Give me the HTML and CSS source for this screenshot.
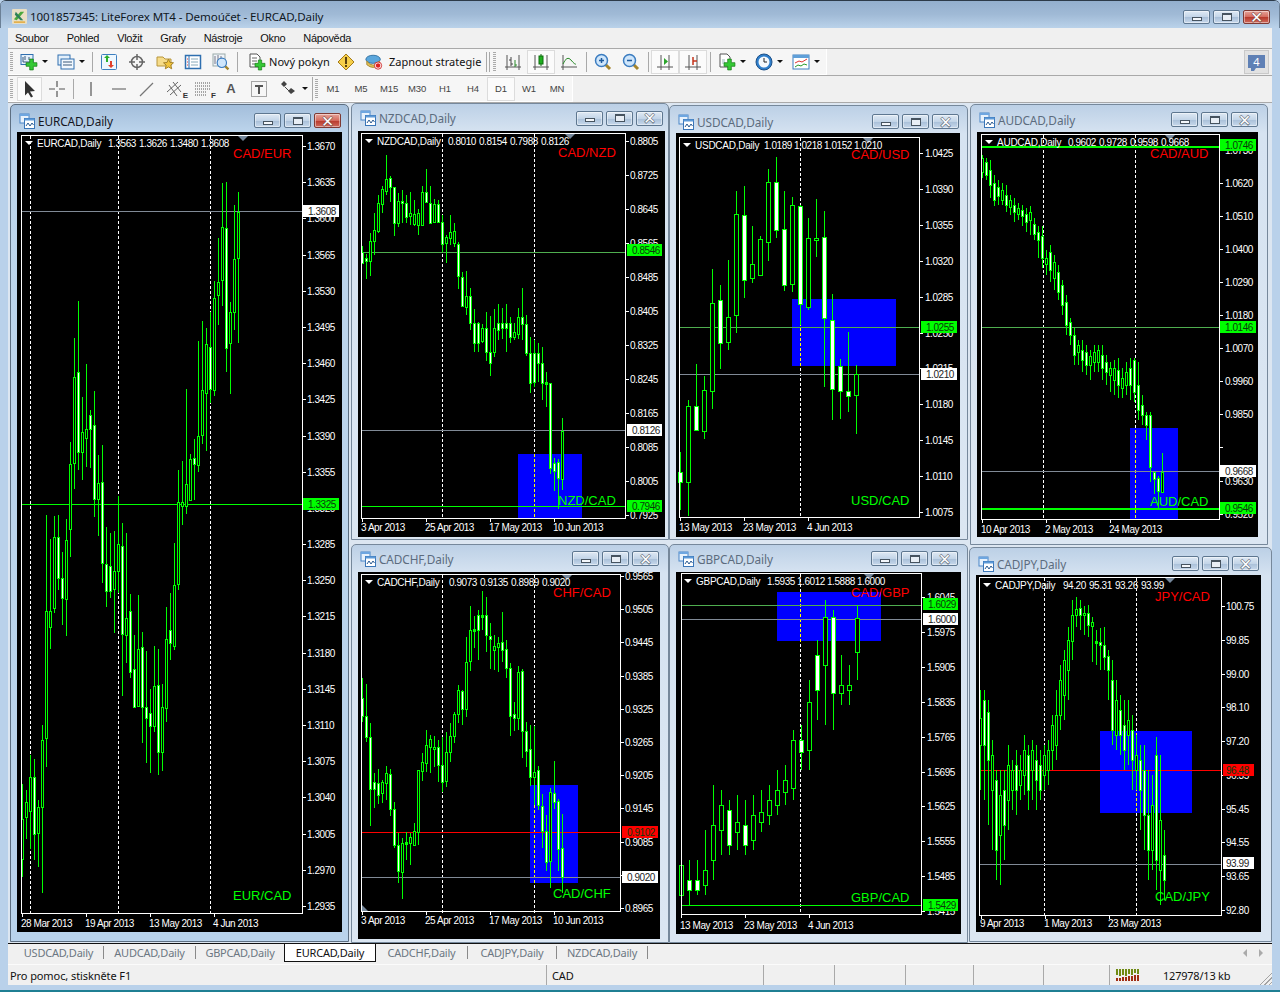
FILE: index.html
```html
<!DOCTYPE html>
<html lang="cs">
<head>
<meta charset="utf-8">
<title>1001857345: LiteForex MT4 - Demoúčet - EURCAD,Daily</title>
<link rel="stylesheet" href="styles.css">
</head>
<body>
<svg class="sprite" aria-hidden="true">
  <symbol id="plus" viewBox="0 0 18 18"><path d="M6.500 1.500h5v5h5v5h-5v5h-5v-5h-5v-5h5z" fill="#35c935" stroke="#127a12"/></symbol>
  <symbol id="chartwin" viewBox="0 0 16 16"><rect x="1" y="1" width="9" height="9" fill="#e8f2fc" stroke="#4a86c8"/><rect x="1" y="1" width="9" height="2" fill="#6ea6e0"/><rect x="5.500" y="5.500" width="10" height="10" fill="#fff" stroke="#3a76b8"/><rect x="5.500" y="5.500" width="10" height="2" fill="#5d9ad8"/><path d="M7 13l2-3 2 3 2-3 1.500 2" fill="none" stroke="#2a5a90"/></symbol>
  <symbol id="glass" viewBox="0 0 18 18"><path d="M11 11l5 5" stroke="#a5852c" stroke-width="3"/><circle cx="7.500" cy="7.500" r="6" fill="#cfe6fb" stroke="#3b7cc0" stroke-width="1.500"/></symbol>
</svg>
<div class="app">
  <header class="titlebar">
    <svg class="appicon" viewBox="0 0 16 16"><rect width="16" height="16" rx="1" fill="#e9dfc4"/><path d="M2 11L9 3h4L5 12z" fill="#4aa83c"/><path d="M4 3l8 9H9L3 6z" fill="#2f7f5a"/><path d="M2 13h12v2H2z" fill="#e3b04e"/></svg>
    <span class="apptitle">1001857345: LiteForex MT4 - Demoúčet - EURCAD,Daily</span>
    <div class="winbtns main">
      <span class="wb"><i class="gmin"></i></span><span class="wb"><i class="gmax"></i></span><span class="wb close"><i class="gx">×</i></span>
    </div>
  </header>
  <nav class="menu"><span>Soubor</span><span>Pohled</span><span>Vložit</span><span>Grafy</span><span>Nástroje</span><span>Okno</span><span>Nápověda</span></nav>
  <div class="tbrow r1">
    <div class="band band1">
      <i class="grip"></i>
      <span class="b wide">
        <svg class="ic" viewBox="0 0 18 18"><rect x="1" y="1.500" width="12" height="10" fill="#e4f0fb" stroke="#2f6fb0"/><path d="M3 4v5h8M5 3v4M9 4v3" stroke="#39597a" fill="none"/><use href="#plus" x="5" y="5" width="13" height="13"/></svg><i class="caret"></i>
      </span>
      <span class="b wide">
        <svg class="ic" viewBox="0 0 18 18"><rect x="1" y="2" width="12" height="10" fill="#e4f0fb" stroke="#2f6fb0"/><rect x="4" y="6" width="13" height="10" fill="#f2f8fe" stroke="#2f6fb0"/><path d="M6 9h9M6 12h9" stroke="#39597a"/></svg><i class="caret"></i>
      </span>
      <i class="sep s1"></i>
      <span class="b"><svg class="ic" viewBox="0 0 18 18"><rect x="1.500" y="1.500" width="15" height="15" rx="1" fill="#eef7fe" stroke="#3c7fc0"/><path d="M6 9V5H4l3-3 3 3H8v4z" fill="#2cb02c"/><path d="M10 8v4H8l3 3 3-3h-2V8z" fill="#e0402c"/></svg></span>
      <span class="b"><svg class="ic" viewBox="0 0 18 18"><circle cx="9" cy="9" r="5.500" fill="none" stroke="#666" stroke-width="1.500"/><path d="M9 1v6M9 11v6M1 9h6M11 9h6" stroke="#666" stroke-width="1.500"/></svg></span>
      <span class="b"><svg class="ic" viewBox="0 0 18 18"><path d="M1 4h6l2 2h6v7H1z" fill="#f6dc8a" stroke="#b8963c"/><path d="M12.500 6l1.500 3.500 3.500.3-2.700 2.400.9 3.600-3.200-1.900-3.200 1.900.9-3.600-2.700-2.400 3.500-.3z" fill="#f2c53d" stroke="#a5832a"/></svg></span>
      <span class="b"><svg class="ic" viewBox="0 0 18 18"><rect x="1.500" y="2.500" width="15" height="13" fill="#fff" stroke="#2f6fb0" stroke-width="1.500"/><path d="M5 3v12" stroke="#2f6fb0"/><path d="M3 6h1M3 9h1M3 12h1" stroke="#d33"/><path d="M7 6h7M7 9h7M7 12h7" stroke="#8ab"/></svg></span>
      <span class="b"><svg class="ic" viewBox="0 0 18 18"><rect x="1" y="1" width="12" height="12" fill="#f0f4f8" stroke="#9aa"/><path d="M3 3v8M6 2v6M9 3v8" stroke="#778"/><use href="#glass" x="4" y="4" width="14" height="14"/></svg></span>
      <i class="sep"></i>
      <span class="b labeled order"><svg class="ic" viewBox="0 0 18 18"><path d="M2 1h7l3 3v10H2z" fill="#fff" stroke="#555"/><path d="M4 5h5M4 8h5M4 11h3" stroke="#666"/><use href="#plus" x="6" y="6" width="12" height="12"/></svg><span class="tbtxt">Nový pokyn</span></span>
      <span class="b"><svg class="ic" viewBox="0 0 18 18"><path d="M9 1l8 8-8 8-8-8z" fill="#f6cf4a" stroke="#a37a1a"/><path d="M8 4h2v7H8zM8 12h2v2H8z" fill="#5a4210"/></svg></span>
      <span class="b labeled strat"><svg class="ic" viewBox="0 0 20 18"><ellipse cx="9" cy="6" rx="8" ry="4.500" fill="#5aa6dc" stroke="#2f6fa0"/><path d="M2 8q7 9 14 0v4q-7 6-14 0z" fill="#e3c25a" stroke="#a5852c"/><circle cx="14.500" cy="13" r="4" fill="#fff" stroke="#c22"/><circle cx="14.500" cy="13" r="2.500" fill="#d22"/></svg><span class="tbtxt">Zapnout strategie</span></span>
      <i class="sep double"></i>
      <i class="grip g2"></i>
      <span class="b"><svg class="ic" viewBox="0 0 18 18"><path d="M3 17V2M15 17V2M1 14h16" stroke="#555" fill="none"/><path d="M7 13V4M7 7H5M7 11h2" stroke="#444" fill="none"/><path d="M11 14V7M11 12h2" stroke="#2a8a2a" fill="none"/></svg></span>
      <span class="b on"><svg class="ic" viewBox="0 0 18 18"><path d="M3 17V2M15 17V2M1 14h16" stroke="#555" fill="none"/><rect x="7" y="3" width="4" height="8" fill="#1eb01e" stroke="#0d6d0d"/><path d="M9 1v2M9 11v2" stroke="#0d6d0d"/></svg></span>
      <span class="b"><svg class="ic" viewBox="0 0 18 18"><path d="M3 17V2M1 14h16" stroke="#555" fill="none"/><path d="M3 11q4-9 8-4t5 4" stroke="#2a8a2a" fill="none"/></svg></span>
      <i class="sep s2"></i>
      <span class="b"><svg class="ic" viewBox="0 0 18 18"><use href="#glass"/><path d="M5 7.500h5M7.500 5v5" stroke="#1d5a9c" stroke-width="1.500"/></svg></span>
      <span class="b"><svg class="ic" viewBox="0 0 18 18"><use href="#glass"/><path d="M5 7.500h5" stroke="#1d5a9c" stroke-width="1.500"/></svg></span>
      <i class="sep s2"></i>
      <span class="b on"><svg class="ic" viewBox="0 0 18 18"><path d="M5 17V2M13 17V2M1 14h16" stroke="#555" fill="none"/><path d="M8 5l4 3.500-4 3.500z" fill="#2aa52a"/></svg></span>
      <span class="b on"><svg class="ic" viewBox="0 0 18 18"><path d="M5 17V2M13 17V2M1 14h16" stroke="#555" fill="none"/><path d="M9 4v8M9 8h4" stroke="#c4341c" stroke-width="1.500"/></svg></span>
      <i class="sep s2"></i>
      <span class="b wide w5"><svg class="ic" viewBox="0 0 18 18"><path d="M2 1h7l3 3v10H2z" fill="#fff" stroke="#555"/><path d="M4 6h3v5H4z" fill="#cdd"/><use href="#plus" x="5" y="5" width="13" height="13"/></svg><i class="caret"></i></span>
      <span class="b wide w5"><svg class="ic" viewBox="0 0 18 18"><circle cx="9" cy="9" r="8" fill="#2f7fcc" stroke="#1d4f86"/><circle cx="9" cy="9" r="5.500" fill="#f5f9fd"/><path d="M9 5v4h3" stroke="#222" fill="none"/></svg><i class="caret"></i></span>
      <span class="b wide w5"><svg class="ic" viewBox="0 0 18 18"><rect x="1" y="2" width="16" height="14" fill="#fff" stroke="#3c7fc0"/><rect x="1" y="2" width="16" height="3" fill="#5f9fd8"/><path d="M3 10l4-2 3 1 5-3" stroke="#d33" fill="none"/><path d="M3 14l3-2 3 1 3-2 3 1" stroke="#2a9a2a" fill="none"/></svg><i class="caret"></i></span>
    </div>
    <div class="mailicon"><span>4</span></div>
  </div>
  <div class="tbrow r2">
    <div class="band band2">
      <i class="grip"></i>
      <span class="d on first"><svg class="ic" viewBox="0 0 18 18"><path d="M4 1l10 10-5 .5 3 5-2 1-3-5-3 3z" fill="#333"/></svg></span>
      <span class="d"><svg class="ic" viewBox="0 0 18 18"><path d="M9 1v6M9 11v6M1 9h6M11 9h6" stroke="#555" stroke-width="1.200"/></svg></span>
      <i class="sep s4"></i>
      <span class="d"><svg class="ic" viewBox="0 0 18 18"><path d="M9 2v14" stroke="#555" stroke-width="1.200"/></svg></span>
      <span class="d"><svg class="ic" viewBox="0 0 18 18"><path d="M2 9h14" stroke="#555" stroke-width="1.200"/></svg></span>
      <span class="d"><svg class="ic" viewBox="0 0 18 18"><path d="M2 16L15 3" stroke="#777" stroke-width="1.200"/></svg></span>
      <span class="d"><svg class="ic" viewBox="0 0 18 18"><path d="M1 12L12 2M4 15L15 5M3 5l8 11M7 2l8 10" stroke="#666"/></svg><b class="mini">E</b></span>
      <span class="d"><svg class="ic" viewBox="0 0 18 18"><path d="M1 3h15M1 6h15M1 9h15M1 12h11M1 15h11" stroke="#555" stroke-dasharray="1 1"/></svg><b class="mini">F</b></span>
      <span class="d"><span class="ta">A</span></span>
      <span class="d"><svg class="ic" viewBox="0 0 18 18"><rect x="1.500" y="1.500" width="15" height="15" fill="none" stroke="#555" stroke-dasharray="1 1"/><path d="M5 5h8v2h-3v7H8V7H5z" fill="#555"/></svg></span>
      <span class="d wide2"><svg class="ic" viewBox="0 0 18 18"><path d="M5 1l3 3-3 3-3-3zM12 8l4 3-4 3-3-3z" fill="#444"/><path d="M6 7l4 4" stroke="#444"/></svg><i class="caret"></i></span>
      <i class="sep s3"></i>
      <i class="grip g3"></i>
      <span class="tf">M1</span><span class="tf">M5</span><span class="tf">M15</span><span class="tf">M30</span><span class="tf">H1</span><span class="tf">H4</span><span class="tf on">D1</span><span class="tf">W1</span><span class="tf">MN</span>
    </div>
  </div>
  <main class="mdi">
    <section class="win w-eur active"><div class="wt"><svg class="wi"><use href="#chartwin"/></svg><span class="wn">EURCAD,Daily</span><div class="winbtns"><span class="wb"><i class="gmin"></i></span><span class="wb"><i class="gmax"></i></span><span class="wb close"><i class="gx">×</i></span></div></div><div class="chart" data-c="eur"></div></section>
    <section class="win w-nzd"><div class="wt"><svg class="wi"><use href="#chartwin"/></svg><span class="wn">NZDCAD,Daily</span><div class="winbtns"><span class="wb"><i class="gmin"></i></span><span class="wb"><i class="gmax"></i></span><span class="wb"><i class="gx">×</i></span></div></div><div class="chart" data-c="nzd"></div></section>
    <section class="win w-chf"><div class="wt"><svg class="wi"><use href="#chartwin"/></svg><span class="wn">CADCHF,Daily</span><div class="winbtns"><span class="wb"><i class="gmin"></i></span><span class="wb"><i class="gmax"></i></span><span class="wb"><i class="gx">×</i></span></div></div><div class="chart" data-c="chf"></div></section>
    <section class="win w-usd"><div class="wt"><svg class="wi"><use href="#chartwin"/></svg><span class="wn">USDCAD,Daily</span><div class="winbtns"><span class="wb"><i class="gmin"></i></span><span class="wb"><i class="gmax"></i></span><span class="wb"><i class="gx">×</i></span></div></div><div class="chart" data-c="usd"></div></section>
    <section class="win w-gbp"><div class="wt"><svg class="wi"><use href="#chartwin"/></svg><span class="wn">GBPCAD,Daily</span><div class="winbtns"><span class="wb"><i class="gmin"></i></span><span class="wb"><i class="gmax"></i></span><span class="wb"><i class="gx">×</i></span></div></div><div class="chart" data-c="gbp"></div></section>
    <section class="win w-aud"><div class="wt"><svg class="wi"><use href="#chartwin"/></svg><span class="wn">AUDCAD,Daily</span><div class="winbtns"><span class="wb"><i class="gmin"></i></span><span class="wb"><i class="gmax"></i></span><span class="wb"><i class="gx">×</i></span></div></div><div class="chart" data-c="aud"></div></section>
    <section class="win w-jpy"><div class="wt"><svg class="wi"><use href="#chartwin"/></svg><span class="wn">CADJPY,Daily</span><div class="winbtns"><span class="wb"><i class="gmin"></i></span><span class="wb"><i class="gmax"></i></span><span class="wb"><i class="gx">×</i></span></div></div><div class="chart" data-c="jpy"></div></section>
  </main>
  <div class="tabs">
    <span class="tab t90">USDCAD,Daily</span><span class="tab t92">AUDCAD,Daily</span><span class="tab t88 noline">GBPCAD,Daily</span><span class="tab t92 cur">EURCAD,Daily</span><span class="tab t92">CADCHF,Daily</span><span class="tab t89">CADJPY,Daily</span><span class="tab t91">NZDCAD,Daily</span>
    <span class="tabarrows"><i class="al"></i><i class="ar"></i></span>
  </div>
  <footer class="status">
    <span class="st s539">Pro pomoc, stiskněte F1</span><span class="st s217">CAD</span><span class="st s71"></span><span class="st s71"></span><span class="st s68"></span><span class="st s70"></span><span class="st s66"></span>
    <span class="bars"><svg viewBox="0 0 25 12"><path d="M1 0v6M4 0v7M7 0v6M10 0v7M13 0v5M16 0v6M19 0v4M22 0v5" stroke="#6f8a12" stroke-width="2"/><path d="M1 9v3M4 9v3M7 8v4M10 8v4M13 7v5M16 7v5M19 6v6M22 6v6" stroke="#a02c12" stroke-width="2"/></svg></span>
    <span class="mem">127978/13 kb</span>
    <i class="resize"></i>
  </footer>
  <div class="bottomframe"></div>
</div>
<script src="chart.js"></script>
</body>
</html>
```
FILE: styles.css
```css
*{box-sizing:border-box}
html,body{margin:0;padding:0;background:#b9d1ea;overflow:hidden}
.sprite{position:absolute;width:0;height:0}
.app{width:1280px;height:992px;display:flex;flex-direction:column;font-family:"Noto Sans","DejaVu Sans",sans-serif;font-size:11.5px;color:#111;background:#b9d1ea;border-radius:6px 6px 0 0;border-top:1px solid #2c3a48;overflow:hidden}
.titlebar{height:27px;flex:none;display:flex;align-items:center;padding:4px 0 0 11px;background:linear-gradient(#93afcd,#a0bad6 50%,#bad2ea);border-left:1px solid #6b8096;border-right:1px solid #6b8096}
.appicon{width:15px;height:15px;flex:none}
.apptitle{margin-left:3px;font-size:11.6px;letter-spacing:-.12px;color:#10181f}
.winbtns{margin-left:auto;display:flex;gap:3px;height:15px}
.winbtns.main{margin-right:9px;height:14px}
.wb{width:27px;height:100%;display:flex;align-items:center;justify-content:center;border:1px solid #5e7790;border-radius:2px;background:linear-gradient(#dfe9f4,#c3d5e8 50%,#a8bfd8 52%,#c8d9ec);box-shadow:inset 0 0 0 1px rgba(255,255,255,.45)}
.wb.close{background:linear-gradient(#e6a49a,#d46a5d 50%,#b8392b 52%,#cf6a5c);border-color:#7e3a34}
.gmin{display:block;width:10px;height:4px;margin-top:4px;border:1px solid #46535f;background:#f4f7fb}
.gmax{display:block;width:10px;height:8px;border:1px solid #46535f;border-top-width:2px;background:#e8eef5}
.gx{font-style:normal;font-weight:bold;font-size:20px;line-height:12px;color:#fff;font-family:"Liberation Sans",sans-serif;-webkit-text-stroke:.5px #46535f}
.close .gx{-webkit-text-stroke:.5px #6a2a24}
.menu{height:21px;flex:none;margin:0 8px;padding-left:7px;display:flex;align-items:center;gap:18px;background:#f0f0f0;border-bottom:1px solid #a9a9a9;font-family:"Liberation Sans",sans-serif;font-size:11px;letter-spacing:-.3px}
.tbrow{flex:none;height:27px;margin:0 8px;display:flex;background:#f0f0f0;border-bottom:1px solid #a9a9a9;position:relative}
.band{display:flex;align-items:center;height:26px;background:#f6f6f6;border-right:1px solid #fff;border-bottom:1px solid #fff;padding-left:2px}
.band1{width:819px}
.band2{width:565px}
.grip{display:block;width:3px;height:20px;margin-right:4px;background:repeating-linear-gradient(#aaa 0 1px,transparent 1px 2px);flex:none}
.b{width:28px;height:24px;display:flex;align-items:center;justify-content:center;position:relative;flex:none}
.b.wide{width:37px;justify-content:flex-start;padding-left:3px}
.b.wide.w5{padding-left:5px}
.b.on,.d.on,.tf.on{background:#fbfbfb;outline:1px solid #dcdcdc;outline-offset:-1px;box-shadow:inset 1px 1px 0 #d0d0d0}
.ic{width:18px;height:18px;flex:none}
.caret{display:block;width:0;height:0;margin-left:4px;border:3px solid transparent;border-top:3px solid #111;border-bottom:0;flex:none}
.sep{display:block;width:1px;height:20px;margin:0 2px;background:#a9a9a9;flex:none}
.sep.s1{margin:0 2px 0 1px}
.sep.s4{margin:0 3px 0 2px}
.sep.double{margin:0 2px 0 3px;box-shadow:3px 0 0 #a9a9a9}
.sep.s2{margin:0 2px 0 3px}
.sep.s3{margin:0 2px 0 2px;height:24px}
.labeled{justify-content:flex-start;padding-left:8px;gap:3px}
.order{width:92px}
.strat{width:123px;padding-left:5px;gap:6px}
.tbtxt{font-size:11px;letter-spacing:.02px;white-space:nowrap}
.g2{margin:0 3px 0 4px}
.d{width:28px;height:24px;display:flex;align-items:center;justify-content:center;position:relative;flex:none}
.band2 .grip:first-child{margin-right:6px}
.d.first{width:25px;margin-left:-2px;margin-right:1px}
.d.wide2{width:36px;margin-left:1px;justify-content:flex-start;padding-left:5px}
.d.wide2 .caret{margin-left:5px}
.mini{position:absolute;right:1px;bottom:1px;font-size:8px;color:#333;font-weight:bold;font-family:"Liberation Sans",sans-serif}
.ta{font-size:13px;font-weight:bold;color:#555;font-family:"Liberation Sans",sans-serif}
.grip.g3{margin-right:1px}
.tf{width:28px;height:24px;display:flex;align-items:center;justify-content:center;font-size:9.5px;color:#444;letter-spacing:-.1px;flex:none;font-family:"Liberation Sans",sans-serif}
.mailicon{position:absolute;right:3px;top:1px;width:25px;height:24px;background:#e2e2e2;border:1px solid #c9c9c9;display:flex;justify-content:center;padding-top:4px}
.mailicon span{display:block;position:relative;width:17px;height:13px;background:#5f80b5;color:#fff;font-size:11px;line-height:13px;text-align:center}
.mailicon span::after{content:"";position:absolute;left:3px;top:13px;border:3px solid transparent;border-top:3px solid #5f80b5;border-left:3px solid #5f80b5;border-bottom:0;border-right-width:2px}
.mdi{position:relative;flex:none;height:840px;margin:0 8px;background:#dce6f1;overflow:hidden}
.win{position:absolute;display:flex;flex-direction:column;padding:0 6px 6px;border:1px solid #76889b;border-radius:5px 5px 0 0;background:linear-gradient(#bcd0e6,#d6e3f1 28px,#dbe6f2)}
.win.active{background:linear-gradient(#a3bedb,#bdd5ec 28px,#b9d3ec);border-color:#5d6f82}
.wt{height:27px;flex:none;display:flex;align-items:center;padding:4px 0 0 2px}
.wi{width:16px;height:16px;flex:none}
.wn{margin-left:3px;font-size:11.8px;letter-spacing:-.1px;color:#5c6c7e}
.active .wn{color:#15151f}
.wt .winbtns{margin-right:1px}
.chart{flex:1;min-height:0;background:#000;position:relative}
.chart svg{display:block;position:absolute;left:0;top:0}
.w-eur{left:2px;top:1px;width:339px;height:838px;padding-bottom:9px}
.w-nzd{left:343px;top:0;width:318px;height:437px;padding:0 3px 2px 6px}
.w-nzd .wt{padding-top:1px}
.w-nzd .winbtns{margin-right:2px}
.w-chf{left:343px;top:441px;width:318px;height:399px;padding:0 8px 3px 6px}
.w-chf .wt{padding-top:0}
.w-usd{left:661px;top:2px;width:299px;height:435px;padding:0 7px 2px 6px}
.w-gbp{left:661px;top:441px;width:299px;height:399px;padding:0 6px 8px 6px}
.w-gbp .wt{padding-top:0}
.w-gbp .winbtns{margin-right:3px}
.w-aud{left:962px;top:1px;width:298px;height:441px;padding:0 9px 7px 6px}
.w-aud .wt{padding-top:2px}
.w-aud .winbtns{margin-right:0}
.w-jpy{left:961px;top:444px;width:303px;height:395px;padding:0 10px 9px 6px}
.w-jpy .winbtns{margin-right:2px}
.lbl{font-family:"Liberation Sans",sans-serif;font-size:10px;letter-spacing:-.45px}
.hdr{font-family:"Liberation Sans",sans-serif;font-size:10px;letter-spacing:-.25px}
.big{font-family:"Liberation Sans",sans-serif;font-size:13px}
.tabs{flex:none;height:21px;margin:0 8px;padding-left:6px;display:flex;background:#f0f0f0;border-top:1px solid #111;color:#6c7782;font-size:11px;letter-spacing:-.22px;position:relative}
.tab{display:flex;align-items:center;justify-content:center;height:13px;margin-top:2px;border-right:1px solid #8a8a8a;flex:none}
.tab.noline{border-right:0}
.tab.cur{height:19px;margin-top:-1px;background:#fff;color:#111;border:1px solid #111}
.t90{width:90px}.t92{width:92px}.t88{width:88px}.t89{width:89px}.t91{width:91px}
.tabarrows{position:absolute;right:9px;top:5px;display:flex;gap:12px}
.al,.ar{display:block;width:0;height:0;border:4px solid transparent}
.al{border-right:4px solid #aaa;border-left:0}
.ar{border-left:4px solid #aaa;border-right:0}
.status{flex:none;height:21px;margin:0 8px;display:flex;align-items:center;background:#f0f0f0;border-top:1px solid #fbfbfb;position:relative;font-size:11px;letter-spacing:-.09px}
.st{height:100%;display:flex;align-items:center;padding-left:2px;flex:none;border-right:1px solid #a9a9a9}
.s539{width:539px}.s217{width:217px;padding-left:5px}.s71{width:71px}.s68{width:68px}.s70{width:70px}.s66{width:66px}
.bars{display:block;width:25px;height:12px;margin-left:6px;flex:none}
.bars svg{display:block;width:25px;height:12px}
.mem{margin-left:22px;letter-spacing:-.22px}
.resize{position:absolute;right:0;bottom:0;width:14px;height:14px;background:repeating-linear-gradient(135deg,transparent 0 2px,#a4a4a4 2px 3px);clip-path:polygon(100% 0,100% 100%,0 100%)}
.bottomframe{flex:none;height:7px;margin-top:auto;border-bottom:2px solid #1f7f93;background:#b9d1ea}
```
FILE: chart.js
```js
const G='#00ff00',R='#ff0000',W='#ffffff',B='#0000ff',GY='#808a96',DG='#4fae4f';
const CH={
eur:{frame:[21,135,302,913],half:1,step:4,x0:22,v:[30,118,210],
 hdr:['EURCAD,Daily',25,37,108,31,['1.3563','1.3626','1.3480','1.3608']],tri:243,
 ylab:[307,146,36.19,['1.3670','1.3635','1.3600','1.3565','1.3530','1.3495','1.3460','1.3425','1.3390','1.3355','1.3320','1.3285','1.3250','1.3215','1.3180','1.3145','1.3110','1.3075','1.3040','1.3005','1.2970','1.2935']],
 dates:[927,[[21,'28 Mar 2013'],[85,'19 Apr 2013'],[149,'13 May 2013'],[213,'4 Jun 2013']]],
 lines:[[211,GY,1],[504,G,1]],boxes:[[211,W,'1.3608'],[504,G,'1.3325']],bx:[303,36],
 red:['CAD/EUR',233,158],green:['EUR/CAD',233,900],
 c:[[784,819,859,877,0],[790,802,817,839,0],[755,777,811,849,0],[759,777,834,860,1],[800,807,833,867,0],[725,740,807,893,0],[515,611,738,767,0],[539,611,627,649,0],[516,537,608,613,0],[515,537,578,590,1],[552,578,598,625,1],[519,540,599,636,0],[442,464,529,557,0],[338,377,463,489,0],[301,372,452,470,1],[397,432,452,480,0],[364,429,438,467,0],[410,415,429,468,1],[391,425,499,517,1],[455,483,499,536,0],[445,482,563,583,1],[527,564,591,607,1],[533,566,591,598,1],[531,571,589,633,0],[496,544,571,593,0],[523,546,634,696,1],[533,618,635,663,0],[594,611,672,678,1],[635,669,707,707,1],[595,649,706,707,0],[632,647,707,743,1],[651,707,718,763,1],[689,713,726,773,1],[646,686,726,732,0],[649,685,752,775,1],[684,707,752,771,0],[607,639,708,722,0],[593,630,643,660,1],[543,585,646,650,0],[470,502,584,590,0],[461,502,506,525,0],[389,484,506,514,0],[454,459,500,501,0],[439,458,464,500,1],[341,436,465,472,0],[321,390,435,444,0],[328,344,393,451,0],[312,347,389,403,1],[281,298,390,396,0],[238,282,295,325,0],[183,227,280,306,0],[182,228,348,372,1],[302,312,343,394,0],[205,259,312,330,0],[192,212,258,343,0]]},
nzd:{frame:[361,133,625,518],half:1,step:4,x0:362,v:[442,534],
 hdr:['NZDCAD,Daily',365,377,448,31,['0.8010','0.8154','0.7988','0.8126']],tri:570,
 ylab:[630,141,34,['0.8805','0.8725','0.8645','0.8565','0.8485','0.8405','0.8325','0.8245','0.8165','0.8085','0.8005','0.7925']],
 dates:[531,[[361,'3 Apr 2013'],[425,'25 Apr 2013'],[489,'17 May 2013'],[553,'10 Jun 2013']]],
 lines:[[252,DG,1],[430,GY,1],[506,G,1]],boxes:[[250,G,'0.8546'],[430,W,'0.8126'],[506,G,'0.7946']],bx:[627,35],
 rect:[518,454,64,64],red:['CAD/NZD',558,157],green:['NZD/CAD',558,505],
 c:[[246,252,263,264,1],[254,258,261,279,1],[233,241,261,276,0],[213,230,241,255,0],[195,203,231,233,0],[186,189,204,213,0],[155,179,191,195,0],[176,178,187,202,1],[187,187,223,236,1],[193,201,223,227,0],[190,201,203,223,1],[195,203,217,223,1],[192,213,216,225,0],[200,214,224,226,0],[209,213,225,235,0],[186,192,225,226,0],[169,192,202,203,1],[186,203,223,224,1],[199,204,222,222,0],[200,204,222,222,1],[215,222,244,252,1],[235,237,243,263,0],[215,232,238,245,0],[223,231,243,247,0],[242,244,276,289,1],[272,277,306,307,1],[271,296,307,315,0],[288,296,323,330,1],[309,323,343,352,1],[322,323,343,352,1],[324,328,341,343,0],[312,328,352,361,1],[316,352,363,376,1],[309,328,352,357,0],[304,323,330,340,1],[308,323,328,339,1],[304,323,328,352,1],[317,323,337,343,1],[323,332,337,340,0],[308,317,334,339,0],[288,317,324,340,1],[315,324,353,356,1],[337,353,383,393,1],[340,353,382,387,1],[343,353,363,382,1],[347,363,383,400,1],[372,382,383,407,1],[383,383,468,474,1],[458,463,471,491,1],[459,462,478,509,1],[418,431,479,490,0]]},
chf:{frame:[361,574,620,911],half:1,step:4,x0:362,v:[442,534],corner:1,
 hdr:['CADCHF,Daily',365,377,449,31,['0.9073','0.9135','0.8989','0.9020']],tri:567,
 ylab:[625,576,33.2,['0.9565','0.9505','0.9445','0.9385','0.9325','0.9265','0.9205','0.9145','0.9085','0.9025','0.8965']],
 dates:[924,[[361,'3 Apr 2013'],[425,'25 Apr 2013'],[489,'17 May 2013'],[553,'10 Jun 2013']]],
 lines:[[832,R,1],[877,GY,1]],boxes:[[832,R,'0.9102'],[877,W,'0.9020']],bx:[622,36],
 rect:[530,785,48,98],red:['CHF/CAD',553,597],green:['CAD/CHF',553,898],
 c:[[678,698,716,722,1],[684,716,737,742,1],[723,737,789,826,1],[773,782,789,808,1],[769,783,795,804,1],[780,782,793,803,0],[766,773,783,800,0],[769,774,809,816,1],[802,809,845,848,1],[833,845,871,883,1],[838,843,872,899,0],[832,842,843,860,0],[833,837,843,865,0],[823,831,845,845,0],[770,770,832,845,0],[753,762,771,781,0],[730,745,763,772,0],[735,739,747,773,0],[736,747,749,767,0],[740,747,765,782,1],[737,765,782,792,1],[732,752,781,787,0],[723,736,752,762,0],[712,714,736,743,0],[685,690,714,723,0],[690,691,709,725,1],[637,662,709,717,0],[606,630,661,671,0],[616,629,629,648,0],[610,615,630,660,1],[591,615,616,630,0],[597,615,635,652,1],[623,636,639,669,1],[635,646,650,670,0],[637,643,647,672,0],[612,642,650,662,1],[640,649,668,678,1],[663,668,716,736,1],[702,714,718,731,1],[666,672,718,730,0],[669,671,731,758,1],[722,731,751,767,1],[725,749,777,786,1],[726,772,777,805,0],[766,770,805,810,1],[794,806,831,848,1],[815,831,862,871,1],[788,792,861,888,0],[761,793,802,809,1],[799,801,849,871,1],[814,848,877,893,1]]},
usd:{frame:[679,137,919,517],half:2,step:8,x0:680,v:[800],
 hdr:['USDCAD,Daily',683,695,764,30,['1.0189','1.0218','1.0152','1.0210']],tri:868,
 ylab:[925,153,35.9,['1.0425','1.0390','1.0355','1.0320','1.0285','1.0250','1.0215','1.0180','1.0145','1.0110','1.0075']],
 dates:[531,[[679,'13 May 2013'],[743,'23 May 2013'],[807,'4 Jun 2013']]],
 lines:[[327,DG,1],[374,GY,1]],boxes:[[327,G,'1.0255'],[374,W,'1.0210']],bx:[921,36],
 rect:[792,299,104,67],red:['CAD/USD',851,159],green:['USD/CAD',851,505],
 c:[[452,472,482,510,1],[400,406,482,516,0],[364,406,430,430,1],[376,390,431,439,0],[269,303,391,409,0],[285,300,343,369,1],[260,317,342,350,0],[191,214,315,333,0],[186,215,280,298,1],[226,264,278,283,0],[236,239,275,276,0],[169,182,242,261,0],[157,182,230,238,1],[191,229,285,291,1],[197,205,284,292,0],[205,206,304,325,1],[218,238,307,310,0],[199,238,240,257,0],[211,237,318,387,1],[294,320,389,420,1],[359,366,391,419,1],[332,391,396,412,1],[365,374,395,434,0]]},
gbp:{frame:[681,573,921,914],half:2,step:8,x0:681,v:[800],
 hdr:['GBPCAD,Daily',684,696,767,30,['1.5935','1.6012','1.5888','1.6000']],tri:869,
 ylab:[927,597,34.9,['1.6045','1.5975','1.5905','1.5835','1.5765','1.5695','1.5625','1.5555','1.5485','1.5415']],
 dates:[929,[[680,'13 May 2013'],[744,'23 May 2013'],[808,'4 Jun 2013']]],
 lines:[[605,DG,1],[619,GY,1],[905,G,1]],boxes:[[604,G,'1.6029'],[619,W,'1.6000'],[905,G,'1.5429']],bx:[923,35],
 rect:[777,592,104,49],red:['CAD/GBP',851,597],green:['GBP/CAD',851,902],
 c:[[855,865,895,905,0],[860,880,890,905,1],[860,880,890,895,1],[830,870,885,895,0],[785,825,860,880,0],[790,805,830,855,0],[800,810,845,855,1],[795,822,832,850,0],[800,825,845,855,1],[795,815,840,850,0],[790,812,822,832,0],[785,800,815,825,0],[770,790,805,815,0],[765,780,792,805,0],[730,740,788,800,0],[725,740,752,770,1],[680,702,750,770,0],[640,655,690,720,1],[600,617,665,725,0],[610,617,693,730,1],[655,685,693,705,0],[665,685,690,705,0],[605,618,652,680,0]]},
aud:{frame:[981,134,1219,519],half:1,step:4,x0:982,v:[1043,1135],
 hdr:['AUDCAD,Daily',985,997,1068,31,['0.9602','0.9728','0.9598','0.9668']],tri:1170,
 ylab:[1225,150,33.05,['1.0730','1.0620','1.0510','1.0400','1.0290','1.0180','1.0070','0.9960','0.9850','','0.9630','0.9520']],
 dates:[533,[[981,'10 Apr 2013'],[1045,'2 May 2013'],[1109,'24 May 2013']]],
 lines:[[146,G,2],[327,DG,1],[471,GY,1],[508,G,2]],boxes:[[145,G,'1.0746'],[327,G,'1.0146'],[471,W,'0.9668'],[508,G,'0.9546']],bx:[1220,36],
 rect:[1130,428,48,91],red:['CAD/AUD',1150,158],green:['AUD/CAD',1150,506],
 c:[[155,158,172,178,0],[158,162,175,180,1],[160,170,185,198,1],[175,183,200,206,1],[180,187,196,205,1],[183,190,200,205,0],[185,195,205,212,1],[195,200,207,215,0],[198,205,212,222,1],[203,208,214,220,0],[205,210,216,226,1],[208,214,222,232,1],[206,212,220,235,0],[218,224,234,240,1],[226,232,240,258,1],[226,236,258,268,1],[250,258,264,275,0],[245,252,270,282,1],[255,262,278,290,0],[265,272,292,300,1],[280,285,305,315,1],[295,302,325,335,1],[318,322,335,345,1],[328,335,355,365,1],[340,345,352,365,0],[340,350,360,372,1],[345,352,365,375,1],[350,356,365,380,0],[345,352,362,372,0],[345,350,362,372,0],[345,355,368,380,1],[355,362,372,385,1],[362,368,375,392,0],[360,368,380,395,0],[358,370,385,398,1],[368,378,388,398,0],[362,372,385,395,0],[358,368,385,400,1],[358,360,392,402,1],[362,385,410,420,1],[395,405,415,425,1],[412,415,425,440,1],[412,415,467,482,1],[472,472,479,494,1],[476,478,491,510,1],[453,472,492,493,0]]},
jpy:{frame:[979,577,1221,915],half:1,step:4,x0:980,v:[1044,1136],
 hdr:['CADJPY,Daily',983,995,1063,26,['94.20','95.31','93.26','93.99']],tri:1170,
 ylab:[1226,606,33.75,['100.75','99.85','99.00','98.10','97.20','96.35','95.45','94.55','93.65','92.80']],
 dates:[927,[[980,'9 Apr 2013'],[1044,'1 May 2013'],[1108,'23 May 2013']]],
 lines:[[770,R,1],[864,GY,1]],boxes:[[770,R,'96.48'],[863,W,'93.99']],bx:[1223,31],
 rect:[1100,731,92,82],red:['JPY/CAD',1155,601],green:['CAD/JPY',1155,901],
 c:[[690,718,745,790,0],[690,700,745,800,1],[700,712,760,825,1],[740,755,790,850,0],[770,780,850,880,1],[770,795,835,885,0],[770,790,825,860,1],[745,765,800,830,0],[760,770,790,810,0],[750,765,790,815,1],[755,770,785,800,0],[735,750,775,795,0],[745,755,790,810,1],[740,750,770,800,0],[745,760,780,810,1],[750,765,790,800,1],[745,755,775,790,0],[740,750,770,785,0],[715,725,750,770,0],[690,715,745,760,0],[665,680,715,730,0],[650,660,695,720,0],[627,640,670,700,0],[600,615,641,660,0],[597,609,615,627,0],[600,608,615,630,1],[606,613,615,635,0],[605,613,625,637,1],[617,622,626,662,0],[630,641,642,665,1],[628,642,645,670,1],[627,645,657,670,1],[650,656,670,700,1],[660,680,730,745,1],[680,700,735,750,0],[695,710,735,755,1],[700,725,750,770,1],[700,720,735,765,0],[715,730,760,790,1],[735,755,770,790,0],[745,760,790,830,1],[745,770,815,850,1],[770,815,850,880,1],[775,805,850,870,0],[737,755,860,890,1],[755,820,870,905,0],[830,855,880,900,1]]}
};
const NS='http://www.w3.org/2000/svg';
function el(p,n,a,txt){const e=document.createElementNS(NS,n);for(const k in a)e.setAttribute(k,a[k]);if(txt!==undefined)e.textContent=txt;p.appendChild(e);return e}
document.querySelectorAll('.chart').forEach(div=>{
 const d=CH[div.dataset.c],b=div.getBoundingClientRect();
 const s=el(div,'svg',{width:b.width,height:b.height,viewBox:`${b.left} ${b.top} ${b.width} ${b.height}`});
 const rc=(x,y,w,h,f)=>el(s,'rect',{x,y,width:w,height:h,fill:f,'shape-rendering':'crispEdges'});
 const tx=(x,y,t,f,c)=>el(s,'text',{x,y,fill:f,class:c},t);
 const [L,T,Rt,Bt]=d.frame;
 if(d.rect)rc(d.rect[0],d.rect[1],d.rect[2],d.rect[3],B);
 d.v.forEach(x=>{for(let y=T+1;y<Bt;y+=5){const inb=d.rect&&x>=d.rect[0]&&x<d.rect[0]+d.rect[2]&&y>=d.rect[1]&&y<d.rect[1]+d.rect[3];rc(x,y,1,3,inb?'#ffff00':W)}});
 d.lines.forEach(l=>rc(L,l[0],Rt-L,l[2],l[1]));
 const hw=d.half;
 d.c.forEach((c,i)=>{const x=d.x0+i*d.step;rc(x,c[0],1,c[3]-c[0],G);rc(x-hw,c[1],2*hw+1,Math.max(c[2]-c[1],2)+1,G);if(c[2]-c[1]>=2)rc(x-hw+1,c[1]+1,2*hw-1,c[2]-c[1]-1,c[4]?W:'#000')});
 rc(L,T,Rt-L+1,1,W);rc(L,Bt,Rt-L+1,1,W);rc(L,T,1,Bt-T,W);rc(Rt,T,1,Bt-T,W);
 el(s,'polygon',{points:`${d.tri-5},${T+1} ${d.tri+5},${T+1} ${d.tri},${T+6}`,fill:'#75879b'});
 if(d.corner)el(s,'polygon',{points:`${L+1},${Bt-6} ${L+1},${Bt} ${L+7},${Bt}`,fill:'#75879b'});
 const h=d.hdr;
 el(s,'polygon',{points:`${h[1]},${T+6} ${h[1]+8},${T+6} ${h[1]+4},${T+10}`,fill:W});
 tx(h[2],T+12,h[0],W,'hdr');h[5].forEach((v,i)=>tx(h[3]+i*h[4],T+12,v,W,'lbl'));
 const yl=d.ylab;yl[3].forEach((v,i)=>{const y=Math.round(yl[1]+i*yl[2]);rc(Rt+1,y,3,1,W);if(v)tx(yl[0],y+4,v,W,'lbl')});
 d.dates[1].forEach(q=>{rc(q[0]+1,Bt+1,1,3,W);tx(q[0],d.dates[0],q[1],W,'lbl')});
 d.boxes.forEach(q=>{rc(d.bx[0],q[0]-6,d.bx[1],12,q[1]);tx(d.bx[0]+(d.bx[1]>32?5:3),q[0]+4,q[2],q[1]===W?'#222':'#0a3a0a','lbl')});
 tx(d.red[1],d.red[2],d.red[0],R,'big');tx(d.green[1],d.green[2],d.green[0],G,'big');
});
```
